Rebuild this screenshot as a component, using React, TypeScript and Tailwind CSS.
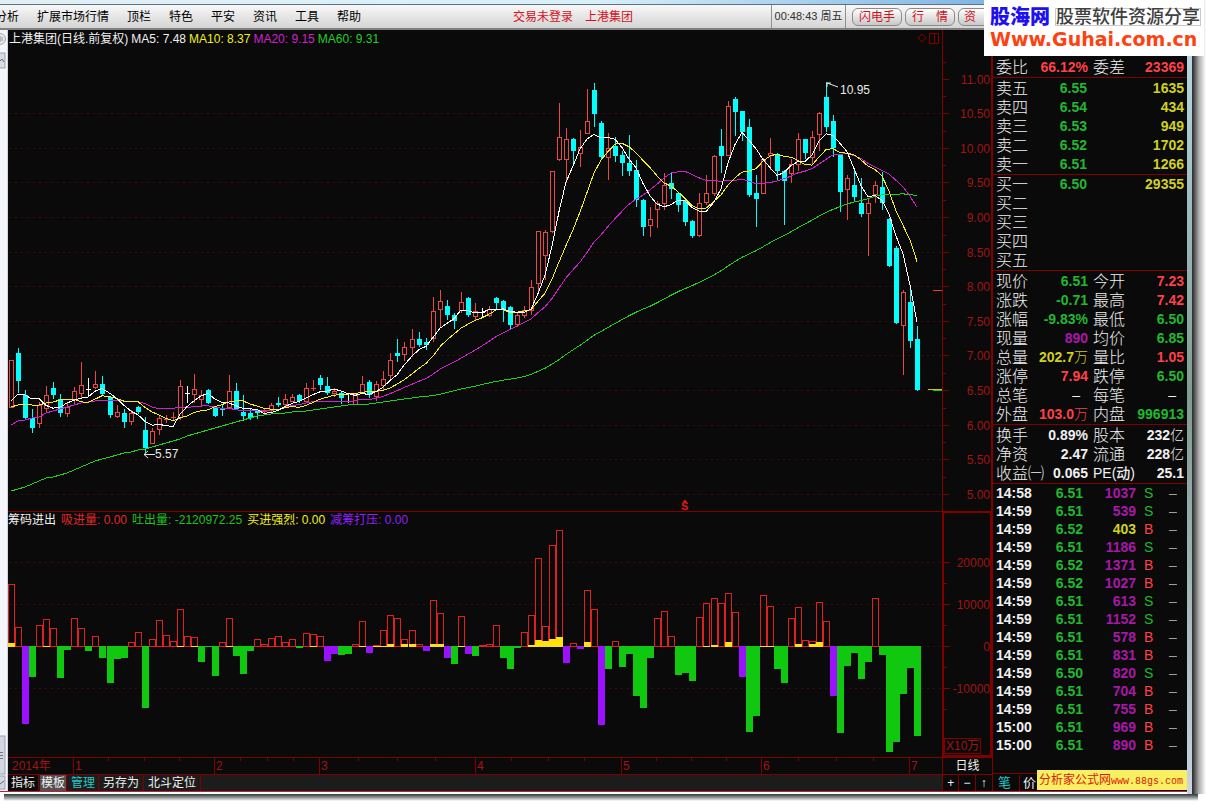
import React from "react";

type Kind = "r" | "c" | "w";
type Candle = [Kind, number, number, number, number];

// Candles on the price panel: kind, high, body top, body bottom, low.
const candles: Candle[] = [
  ["r",360,360,407,407],["c",348,353,381,393],["c",390,395,418,420],["c",409,418,428,433],["r",402,405,423,428],
  ["r",386,395,408,413],["c",382,388,395,399],["c",394,399,413,417],["r",403,407,413,417],["r",387,391,399,404],
  ["r",362,385,393,398],["w",378,389,389,397],["r",371,384,387,389],["c",376,384,394,395],["c",396,397,415,418],
  ["r",405,412,416,418],["c",409,413,422,428],["r",410,413,421,425],["c",406,407,412,414],["c",417,430,448,453],
  ["r",428,431,443,444],["r",415,418,429,435],["r",415,419,419,423],["r",412,417,417,421],["r",380,386,417,420],
  ["w",386,393,393,403],["r",374,389,394,403],["r",390,395,399,407],["c",389,390,403,404],["c",406,407,416,417],
  ["c",405,409,410,416],["r",375,391,407,409],["c",383,391,409,410],["c",395,412,416,421],["c",409,413,418,420],
  ["c",409,411,413,419],["r",409,411,411,414],["r",403,405,410,413],["c",397,403,405,407],["r",394,399,404,406],
  ["r",394,397,401,402],["c",394,395,401,403],["r",383,388,401,402],["r",380,388,388,391],["c",375,378,385,390],
  ["c",377,386,393,395],["r",388,391,393,397],["c",392,393,398,404],["w",395,401,401,403],["r",393,394,404,405],
  ["r",376,384,392,394],["c",380,382,395,398],["r",381,384,396,401],["r",371,379,385,390],["r",353,360,375,380],
  ["c",339,353,356,362],["r",342,347,354,361],["r",329,339,347,357],["c",332,339,345,347],["c",338,342,345,350],
  ["r",297,311,338,342],["r",290,301,309,328],["c",300,306,315,320],["c",313,315,321,329],["r",292,302,310,313],
  ["c",297,298,315,317],["r",303,311,316,320],["w",308,312,312,317],["r",306,309,315,317],["c",297,298,303,309],
  ["c",300,301,309,322],["c",306,307,325,330],["r",313,315,324,327],["r",306,310,315,318],["r",280,287,310,315],
  ["r",231,231,283,293],["r",230,232,255,280],["r",171,171,231,233],["r",103,137,159,161],["r",128,139,159,183],
  ["c",138,139,151,163],["r",130,147,153,167],["r",89,121,133,134],["c",83,90,114,127],["c",121,123,157,159],
  ["r",133,148,157,180],["c",137,146,156,162],["c",151,155,163,176],["c",135,163,171,176],["c",160,170,200,207],
  ["c",199,200,227,236],["r",207,219,225,237],["r",201,203,209,228],["r",173,185,203,210],["c",172,183,189,199],
  ["c",192,193,205,212],["c",200,201,222,226],["c",220,221,236,238],["r",193,203,235,237],["r",175,193,202,205],
  ["r",155,156,193,196],["c",129,146,156,173],["r",101,106,155,156],["c",97,99,112,136],["c",111,111,132,141],
  ["c",119,127,195,197],["c",175,193,199,227],["r",158,159,193,194],["r",138,153,155,170],["c",153,155,171,180],
  ["c",170,171,181,225],["r",159,164,173,183],["r",133,139,164,171],["c",139,139,153,159],["r",131,137,157,164],
  ["r",112,113,134,151],["c",82,97,127,132],["c",115,121,148,157],["c",154,155,192,212],["r",175,178,189,220],
  ["c",171,185,197,201],["c",178,203,214,217],["r",199,203,213,256],["r",181,185,194,203],["c",172,187,203,210],
  ["c",218,219,266,267],["c",246,248,323,324],["r",290,292,325,375],["c",290,302,341,348],["c",326,339,390,391],
];

// Histogram heights: positive = red, negative = green, third kind "p" = purple; last value = yellow overlay.
type Bar = [number, number?, "p"?];
const bars: Bar[] = [
  [62,4],[19],[-78,0,"p"],[-31],[21],[27,1],[18],[-32],[-4],[28],[18],[-5],[10],[-12],[-37],[-13],[-12],[4],[14],[-62],
  [7],[26],[11],[5],[37,1],[10],[9,1],[-16],[-1],[-30],[4],[28,1],[-10],[-28],[-5],[7],[2],[8],[10],[4],
  [7],[-2],[13],[12,1],[10],[-15,0,"p"],[-8,0,"p"],[-9],[-8],[2],[25,1],[-7,0,"p"],[1,1],[16,1],[31,3],[28],[7,3],[16,3],[2],[-5,0,"p"],
  [46,3],[33,3],[-12,0,"p"],[-18],[30,1],[-8,0,"p"],[-10],[1],[2],[21],[-12],[-23],[-2],[14],[31,2],[88,7],[20,6],[101,8],[116,10],[-17,0,"p"],
  [3],[-3,0,"p"],[56,5],[37],[-79,0,"p"],[-23],[5],[-21],[-8],[-50],[-62],[-12],[28],[35],[10],[-29],[-27],[-35],[29],[43,1],
  [48,2],[43],[53,5],[34],[-31,0,"p"],[-86],[-70],[51,1],[40,1],[-23],[-37],[28],[39,3],[6],[5,3],[44,5],[25],[-50,0,"p"],[-87],[-20],
  [-7],[-33],[-16],[48],[-9],[-106],[-96],[-48],[-22],[-90],
];

const px = (i: number) => Math.round(11.2 + i * 7.023);
const closes = candles.map(([k, , t, b]) => (k === "c" ? b : t));

// The first values of each average come from bars left of the visible range.
function average(period: number, seed: number[]) {
  return closes
    .map((_, i) => {
      if (i < seed.length) return `${px(i)},${seed[i]}`;
      const part = closes.slice(Math.max(0, i - period + 1), i + 1);
      return `${px(i)},${(part.reduce((a, b) => a + b, 0) / part.length).toFixed(1)}`;
    })
    .join(" ");
}

const ma60Anchors: [number, number][] = [
  [11,491],[33,484],[47,478],[68,473],[82,467],[100,459],[117,455],[144,449],[173,441],[187,436],[208,430],
  [233,423],[253,417],[270,414],[313,410],[347,405],[377,403],[413,398],[440,394],
];
const ma60Seed = closes.slice(0, 59).map((_, i) => {
  const x = px(i);
  const n = Math.max(1, ma60Anchors.findIndex((a) => a[0] >= x));
  const [x0, y0] = ma60Anchors[n - 1];
  const [x1, y1] = ma60Anchors[n];
  return Math.round(y0 + ((y1 - y0) * (x - x0)) / (x1 - x0));
});

const averages = [
  { color: "#20d020", points: average(60, ma60Seed) },
  { color: "#d020d0", points: average(20, [425,421,420,418,417,413,411,409,407,405,403,402,401,400,400,400,401,401,402]) },
  { color: "#f5f020", points: average(10, [407,405,404,405,405,403,402,400,399]) },
  { color: "#ffffff", points: average(5, [401,394,395,399]) },
];

const priceLevels: [number, string][] = [
  [79,"11.00"],[113,"10.50"],[148,"10.00"],[182,"9.50"],[217,"9.00"],[252,"8.50"],[286,"8.00"],
  [321,"7.50"],[355,"7.00"],[390,"6.50"],[425,"6.00"],[459,"5.50"],[494,"5.00"],
];
const volumeLevels: [number, string][] = [[562,"20000"],[604,"10000"],[646,"0"],[688,"-10000"]];
const months: [number, string][] = [[73,"1"],[214,"2"],[319,"3"],[475,"4"],[621,"5"],[761,"6"],[909,"7"]];
const weekTicks = [108,144,179,240,267,293,358,397,435,511,548,584,656,691,726,798,836,873];

const GRID = "#3c0c0c";
const AXIS = "#800000";
const AXIS_TEXT = "#a01414";

function PriceChart() {
  return (
    <svg viewBox="8 50 984 461" className="block w-full" role="img" aria-label="日线K线图" fontSize="12">
      <g shapeRendering="crispEdges">
        {priceLevels.slice(1).map(([y]) => (
          <line key={y} x1="9" x2="942" y1={y + 0.5} y2={y + 0.5} stroke={GRID} strokeDasharray="2 4" />
        ))}
        <path d="M942.5 50V511M991.5 50V511" stroke={AXIS} />
        {priceLevels.map(([y]) => (
          <path key={y} d={`M943 ${y + 0.5}h6M943 ${y - 16.5}h3`} stroke={AXIS} />
        ))}
        {candles.map(([k, h, t, b, l], i) => {
          const x = px(i);
          const color = k === "c" ? "#00ffff" : k === "r" ? "#e84848" : "#ffffff";
          if (t === b)
            return <path key={i} d={`M${x + 0.5} ${h}V${l}M${x - 2} ${t + 0.5}h5`} stroke={color} fill="none" />;
          return (
            <g key={i}>
              <path d={`M${x + 0.5} ${h}V${t}M${x + 0.5} ${b}V${l}`} stroke={color} />
              {k === "c" ? (
                <rect x={x - 2} y={t} width="5" height={b - t} fill={color} />
              ) : (
                <rect x={x - 1.5} y={t + 0.5} width="4" height={b - t} fill="none" stroke={color} />
              )}
            </g>
          );
        })}
        {averages.map(({ color, points }) => (
          <polyline key={color} points={points} fill="none" stroke={color} />
        ))}
        <path d="M933 290.5h9" stroke="#e04040" />
        <path d="M928 389.5h14" stroke="#c8c820" />
        <path d="M933 390.5h9" stroke="#20c020" />
      </g>
      <path d="M144 454.500H155M148 451l-4 3.500 4 3.500M827 83l11 4M827 87v-4h4" stroke="#e8e8e8" fill="none" />
      <text x="155" y="458" fill="#e8e8e8">5.57</text>
      <text x="840" y="94" fill="#e8e8e8">10.95</text>
      <path d="M682.500 502.500l2.500-3 2.500 3z" fill="#e01818" />
      <text x="681" y="510" fill="#e01818" fontSize="11" fontWeight="bold">S</text>
      {priceLevels.map(([y, label]) => (
        <text key={y} x="990" y={y + 5} textAnchor="end" fill={AXIS_TEXT}>{label}</text>
      ))}
    </svg>
  );
}

function FlowChart() {
  return (
    <svg viewBox="8 529 984 228" className="block w-full" role="img" aria-label="筹码进出柱状图" fontSize="12">
      <g shapeRendering="crispEdges">
        {volumeLevels.map(([y]) => (
          <g key={y}>
            <line x1="9" x2="942" y1={y + 0.5} y2={y + 0.5} stroke={GRID} strokeDasharray="2 4" />
            <path d={`M944 ${y + 0.5}h6M944 ${y + 21.5}h3`} stroke={AXIS} />
          </g>
        ))}
        {bars.map(([v, y = 0, p], i) => {
          const x = px(i);
          if (v < 0) return <rect key={i} x={x - 3} y="646" width="7.100" height={-v} fill={p ? "#9b10ff" : "#10c810"} />;
          return (
            <g key={i}>
              <rect x={x - 2.500} y={646.5 - v} width="6" height={v} fill="none" stroke="#e02020" />
              {y > 0 && <rect x={x - 3} y={647 - y} width="7.100" height={y} fill="#ffe010" />}
            </g>
          );
        })}
        <path d="M943 529V757M991 529V757M942 756H992" stroke={AXIS} strokeWidth="2" />
        <rect x="944.500" y="738.500" width="36" height="15" fill="none" stroke={AXIS} />
      </g>
      <text x="946" y="750" fill={AXIS_TEXT}>X10万</text>
      {volumeLevels.map(([y, label]) => (
        <text key={y} x="990" y={y + 5} textAnchor="end" fill={AXIS_TEXT}>{label}</text>
      ))}
    </svg>
  );
}

function TimeAxis() {
  return (
    <svg viewBox="8 757 934 16" className="block min-w-0 flex-1" role="img" aria-label="时间轴" fontSize="12">
      <g stroke={AXIS} shapeRendering="crispEdges">
        {months.map(([x]) => <path key={x} d={`M${x + 0.5} 757v16`} />)}
        {weekTicks.map((x) => <path key={x} d={`M${x + 0.5} 757v3`} />)}
      </g>
      <text x="12" y="769" fill={AXIS_TEXT}>2014年</text>
      {months.map(([x, m]) => <text key={x} x={x + 2} y="769" fill={AXIS_TEXT}>{m}</text>)}
    </svg>
  );
}

const G = "text-[#20b830]";
const R = "text-[#ff4048]";
const Y = "text-[#d0d020]";
const P = "text-[#a818a8]";
const W = "text-[#f0f0f0]";

const sells = [["卖五","6.55","1635"],["卖四","6.54","434"],["卖三","6.53","949"],["卖二","6.52","1702"],["卖一","6.51","1266"]];
const buys = [["买一","6.50","29355"],["买二","",""],["买三","",""],["买四","",""],["买五","",""]];

const quotes = [
  ["现价","6.51",G,"今开","7.23",R],["涨跌","-0.71",G,"最高","7.42",R],["涨幅","-9.83%",G,"最低","6.50",G],
  ["现量","890",P,"均价","6.85",G],["总量","202.7万",Y,"量比","1.05",R],["涨停","7.94",R,"跌停","6.50",G],
  ["总笔","–",W,"每笔","–",W],["外盘","103.0万",R,"内盘","996913",G],
];
const facts = [
  ["换手","0.89%",W,"股本","232亿",W],["净资","2.47",W,"流通","228亿",W],["收益㈠","0.065",W,"PE(动)","25.1",W],
];
const trades = [
  ["14:58","6.51","1037","S"],["14:59","6.51","539","S"],["14:59","6.52","403","B"],["14:59","6.51","1186","S"],
  ["14:59","6.52","1371","B"],["14:59","6.52","1027","B"],["14:59","6.51","613","S"],["14:59","6.51","1152","S"],
  ["14:59","6.51","578","B"],["14:59","6.51","831","B"],["14:59","6.50","820","S"],["14:59","6.51","704","B"],
  ["14:59","6.51","755","B"],["15:00","6.51","969","B"],["15:00","6.51","890","B"],
];

const sheet = "w-full table-fixed border-separate border-spacing-0";
const section = "border-b border-[#800000]";
const label = "text-left text-base leading-[19px] font-light text-[#f0f0f0] whitespace-nowrap";
const num = "text-right text-sm leading-[19px] whitespace-nowrap";

// Figures are bold; a trailing unit character or a lone dash keeps the normal weight.
function Figure({ value }: { value: string }) {
  const unit = value.match(/[万亿]$/)?.[0];
  if (value === "–") return <span className="pr-2 font-normal">–</span>;
  if (!unit) return <b>{value}</b>;
  return (
    <>
      <b>{value.slice(0, -1)}</b>
      <span className="font-light">{unit}</span>
    </>
  );
}

function OrderTable({ rows }: { rows: string[][] }) {
  return (
    <table className={sheet}>
      <tbody>
        {rows.map(([name, price, vol]) => (
          <tr key={name} className="h-[19px]">
            <th scope="row" className={`w-10 pl-[3px] ${label}`}>{name}</th>
            <td className={`w-[54px] ${num} ${G}`}><Figure value={price} /></td>
            <td className={`pr-[3px] ${num} ${Y}`}><Figure value={vol} /></td>
          </tr>
        ))}
      </tbody>
    </table>
  );
}

function PairTable({ rows }: { rows: string[][] }) {
  return (
    <table className={sheet}>
      <tbody>
        {rows.map(([a, av, ac, b, bv, bc]) => (
          <tr key={a} className="h-[19px]">
            <th scope="row" className={`w-[35px] pl-[3px] ${label}`}>{a}</th>
            <td className={`w-[60px] ${num} ${ac}`}><Figure value={av} /></td>
            <th scope="row" className={`w-[37px] pl-[5px] ${b.startsWith("PE") ? "text-left text-sm leading-[19px] font-medium whitespace-nowrap text-[#f0f0f0]" : label}`}>{b}</th>
            <td className={`pr-[3px] ${num} ${bc}`}><Figure value={bv} /></td>
          </tr>
        ))}
      </tbody>
    </table>
  );
}

function QuotePanel() {
  return (
    <aside className="flex w-[195px] shrink-0 flex-col border-l border-[#800000] bg-[#0a0a0a] pt-7">
      <div className={section}>
        <PairTable rows={[["委比", "66.12%", R, "委差", "23369", R]]} />
      </div>
      <div className={`pt-px ${section}`}>
        <OrderTable rows={sells} />
      </div>
      <div className={section}>
        <OrderTable rows={buys} />
      </div>
      <div className={`pt-px ${section}`}>
        <PairTable rows={quotes} />
      </div>
      <div className={`pt-px ${section}`}>
        <PairTable rows={facts} />
      </div>
      <table className={`text-sm leading-[18px] font-bold ${sheet}`}>
        <tbody>
          {trades.map(([time, price, vol, side], i) => (
            <tr key={i} className="h-[18px]">
              <td className="w-11 pl-[3px] text-[#f0f0f0]">{time}</td>
              <td className={`w-[46px] text-right ${G}`}>{price}</td>
              <td className={`w-[53px] text-right ${vol === "403" ? Y : P}`}>{vol}</td>
              <td className={`pl-2 font-medium ${side === "S" ? G : R}`}>{side}</td>
              <td className="w-[18px] font-normal text-[#a0a0a0]">–</td>
            </tr>
          ))}
        </tbody>
      </table>
      <div className="mt-auto flex h-[18px] items-center border-t border-[#800000] pl-[5px] text-[13px] leading-4">
        <button className="w-[22px] border-r border-[#800000] text-left text-[#20c8c8]">笔</button>
        <button className="w-[16px] text-right text-[#f0f0f0]">价</button>
      </div>
    </aside>
  );
}

const pill =
  "h-[18px] rounded-md border border-[#8a8a8a] bg-linear-to-b from-white to-[#c8c8c8] text-[#d01018] leading-4 whitespace-nowrap";

function MenuBar() {
  return (
    <header className="flex h-[26px] items-center overflow-hidden border-t border-b-2 border-t-[#607080] border-b-[#808080] bg-linear-to-b from-[#f8f8f8] to-[#d4d4d4] text-xs text-black">
      <nav className="-ml-[5px] flex flex-1 gap-[18px] whitespace-nowrap">
        {["分析", "扩展市场行情", "顶栏", "特色", "平安", "资讯", "工具", "帮助"].map((m) => (
          <button key={m}>{m}</button>
        ))}
      </nav>
      <div className="flex w-[258px] shrink-0 gap-3 whitespace-nowrap text-[#d81020]">
        <span>交易未登录</span>
        <span>上港集团</span>
      </div>
      <div className="flex h-full w-[75px] shrink-0 items-center justify-center border-x border-[#909090] text-[#303030]">
        <time className="text-[11px] whitespace-nowrap">00:48:43 周五</time>
      </div>
      <div className="flex w-[341px] shrink-0 gap-[3px] pl-[6px]">
        <button className={`w-[50px] ${pill}`}>闪电手</button>
        <button className={`w-[50px] ${pill}`}>行　情</button>
        <button className={`w-[50px] pl-[5px] text-left ${pill}`}>资</button>
      </div>
    </header>
  );
}

function Watermark() {
  return (
    <div className="absolute top-0 right-[2px] h-14 w-[220px] overflow-hidden bg-white pl-1.5">
      <div className="mt-[5px] flex h-6 items-center gap-[5px] whitespace-nowrap">
        <span className="text-xl leading-6 font-black text-[#2010f0]">股海网</span>
        <span className="border border-[#c8c8c8] text-[18px] leading-4 font-medium text-[#404040]">股票软件资源分享</span>
      </div>
      <a href="http://www.guhai.com.cn" className="block font-['DejaVu_Sans'] text-[19px] leading-5 font-bold whitespace-nowrap text-[#ff4010]">
        Www.Guhai.com.cn
      </a>
    </div>
  );
}

const tool = "h-full border-r border-[#800000]";

export default function App() {
  return (
    <div className="relative min-h-screen w-full bg-white font-['Liberation_Sans','Noto_Sans_CJK_SC',sans-serif]">
      <div className="flex">
        <div className="flex min-w-0 flex-1 flex-col">
          <div className="h-1 bg-linear-to-r from-[#e0f0f4] via-[#d8f0f8] to-[#5098d8]" />
          <MenuBar />
          <div className="flex flex-1">
            <div className="flex w-2 shrink-0 flex-col justify-between border-r border-[#d0d4e0] bg-[#f4f6fc]">
              <svg viewBox="0 0 7 40" className="block h-10 w-[7px]" aria-hidden="true">
                <circle cx="0" cy="9" r="5.500" fill="#e8e8e8" stroke="#a8a8a8" />
                <path d="M0 6v6M2 7v4" stroke="#909090" />
                <rect x="-6" y="23" width="11" height="15" fill="#d8dae4" stroke="#9aa0b0" />
                <path d="M-2 33l4-4 2 3" stroke="#606878" fill="none" />
              </svg>
              <svg viewBox="0 0 7 56" className="block h-14 w-[7px]" aria-hidden="true">
                <rect x="-6" y="1" width="11" height="38" fill="#d4d6e2" stroke="#9aa0b0" />
                <path d="M0 17.500h3M0 20.500h3M0 23.500h3" stroke="#707888" />
                <rect x="-6" y="41" width="11" height="13" fill="#d4d6e2" stroke="#9aa0b0" />
                <path d="M0 49l4-3" stroke="#606878" />
              </svg>
            </div>
            <main className="flex min-w-0 flex-1 flex-col bg-[#0a0a0a]">
              <div className="flex h-5 text-xs leading-[19px] whitespace-nowrap">
                <div className="flex flex-1 gap-[3px] pl-px">
                  <h1 className="text-[#f0f0f0]">上港集团(日线.前复权)</h1>
                  <span className="text-[#f0f0f0]">MA5: 7.48</span>
                  <span className="text-[#f0f020]">MA10: 8.37</span>
                  <span className="text-[#d020d0]">MA20: 9.15</span>
                  <span className="text-[#20d020]">MA60: 9.31</span>
                </div>
                <svg viewBox="0 0 27 20" className="h-5 w-[27px]" fill="none" stroke={AXIS} aria-hidden="true">
                  <path d="M7 4l4 4-4 4-4-4zM14.500 3.500h9v10h-9zM19.500 3.500v10" />
                </svg>
                <div className="w-[50px] border-x border-[#800000]" />
              </div>
              <PriceChart />
              <div className="flex h-[18px] border-t border-[#800000] text-xs leading-[17px] whitespace-nowrap">
                <div className="flex flex-1 gap-[5px]">
                  <h2 className="text-[#f0f0f0]">筹码进出</h2>
                  <span className="text-[#e02828]">吸进量: 0.00</span>
                  <span className="text-[#20c020]">吐出量: -2120972.25</span>
                  <span className="text-[#f0f020]">买进强烈: 0.00</span>
                  <span className="text-[#9020f8]">减筹打压: 0.00</span>
                </div>
                <div className="w-[50px] border-x-2 border-t border-[#800000]" />
              </div>
              <FlowChart />
              <div className="flex h-[17px] border-t border-[#800000]">
                <TimeAxis />
                <div className="w-[50px] shrink-0 border-l border-[#800000] text-center text-xs leading-4 text-[#f0f0f0]">日线</div>
              </div>
              <div className="flex h-[17px] border-t border-[#800000] bg-[#1c1c1c] text-xs leading-4 text-[#f0f0f0]">
                <div className="flex flex-1 whitespace-nowrap">
                  <button className={`bg-[#0a0a0a] px-[3px] ${tool}`}>指标</button>
                  <button className={`mx-px bg-[#505050] px-px ${tool}`}>模板</button>
                  <button className={`px-[3px] text-[#20c8c8] ${tool}`}>管理</button>
                  <button className={`px-1 ${tool}`}>另存为</button>
                  <button className={`px-1 ${tool}`}>北斗定位</button>
                </div>
                <div className="grid w-[50px] shrink-0 grid-cols-3 divide-x divide-[#800000] border-l border-[#800000] bg-[#0a0a0a]">
                  <button aria-label="放大">+</button>
                  <button aria-label="缩小">−</button>
                  <button aria-label="上移">↑</button>
                </div>
              </div>
            </main>
            <div className="relative flex">
              <QuotePanel />
              <a href="http://www.88gs.com" className="absolute right-0 bottom-px h-5 w-[150px] bg-[#f8f060] pl-0.5 text-xs leading-5 whitespace-nowrap text-[#d82010]">
                分析家公式网<span className="font-['Liberation_Mono'] text-[10px]">www.88gs.com</span>
              </a>
            </div>
          </div>
          <div className="h-[3px] border-t border-[#c02030] bg-white" />
        </div>
        <div className="w-[5px] bg-linear-to-b from-[#c0e0f0] via-[#809c94] to-[#c8d4e0]" />
        <div className="w-[14px] bg-linear-to-r from-[#282828] via-[#b0b0b0] to-white" />
      </div>
      <div className="mr-2 ml-1 h-[7px] bg-linear-to-b from-[#303838] to-white" />
      <Watermark />
    </div>
  );
}
